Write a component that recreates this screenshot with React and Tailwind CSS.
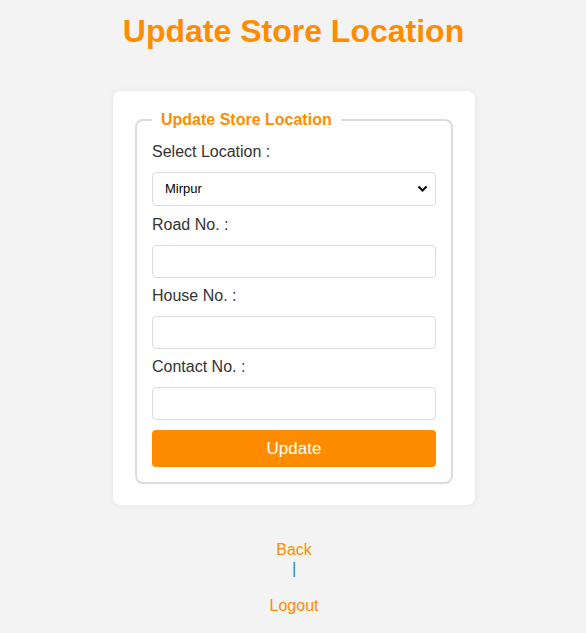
import React from "react";

const Field = ({ label, last, children }) => (
  <div className="flex flex-col">
    <label className="text-[16px] leading-[18px] text-[#333]">{label}</label>
    <div className={`mt-[11px] ${last ? "mb-[10px]" : "mb-[9px]"}`}>{children}</div>
  </div>
);

const App = () => {
  return (
    <div className="min-h-[633px] bg-[#f3f3f3] font-['Liberation_Sans',Arial,sans-serif] flex flex-col items-center">
      <h1 className="mt-[12px] ml-[1px] text-[32px] leading-[38px] font-bold text-[#ff8c00]">
        Update Store Location
      </h1>

      <div className="mt-[41px] ml-[2px] w-[362px] bg-white rounded-[8px] shadow-[0_0_6px_rgba(0,0,0,0.06)] px-[22px] pt-[20px] pb-[21px]">
        <fieldset className="border-2 border-[#dcdcdc] rounded-[8px] px-[15px] pt-[14px] pb-[15px]">
          <legend className="ml-0 px-[9px] text-[16px] leading-[18px] font-bold text-[#ff8c00]">
            Update Store Location
          </legend>

          <div className="flex flex-col">
            <label className="text-[16px] leading-[18px] text-[#333]">Select Location :</label>
            <div className="relative mt-[11px] mb-[10px]">
              <select className="appearance-none w-full h-[34px] border border-[#dcdcdc] rounded-[4px] bg-white pl-[12px] text-[13px] text-black outline-none">
                <option>Mirpur</option>
                <option>Dhanmondi</option>
                <option>Gulshan</option>
              </select>
              <svg
                className="absolute right-[8px] top-[13px] pointer-events-none"
                width="11"
                height="8"
                viewBox="0 0 11 8"
              >
                <path d="M1.5 1.5 L5.5 5.5 L9.5 1.5" fill="none" stroke="#000" strokeWidth="2" />
              </svg>
            </div>
          </div>

          <Field label="Road No. :">
            <input className="w-full h-[33px] border border-[#dcdcdc] rounded-[4px] bg-white px-[10px] outline-none" />
          </Field>

          <Field label="House No. :">
            <input className="w-full h-[33px] border border-[#dcdcdc] rounded-[4px] bg-white px-[10px] outline-none" />
          </Field>

          <Field label="Contact No. :" last>
            <input className="w-full h-[33px] border border-[#dcdcdc] rounded-[4px] bg-white px-[10px] outline-none" />
          </Field>

          <button className="w-full h-[37px] bg-[#ff8c00] text-white text-[17px] rounded-[4px]">
            Update
          </button>
        </fieldset>
      </div>

      <div className="mt-[35px] ml-[2px] flex flex-col items-center text-[16px] leading-[18px]">
        <a className="mt-[1px] text-[#ff8c00]">Back</a>
        <span className="text-[#1f80e0] leading-[20px]">|</span>
        <a className="mt-[18px] text-[#ff8c00]">Logout</a>
      </div>
    </div>
  );
};

export default App;
